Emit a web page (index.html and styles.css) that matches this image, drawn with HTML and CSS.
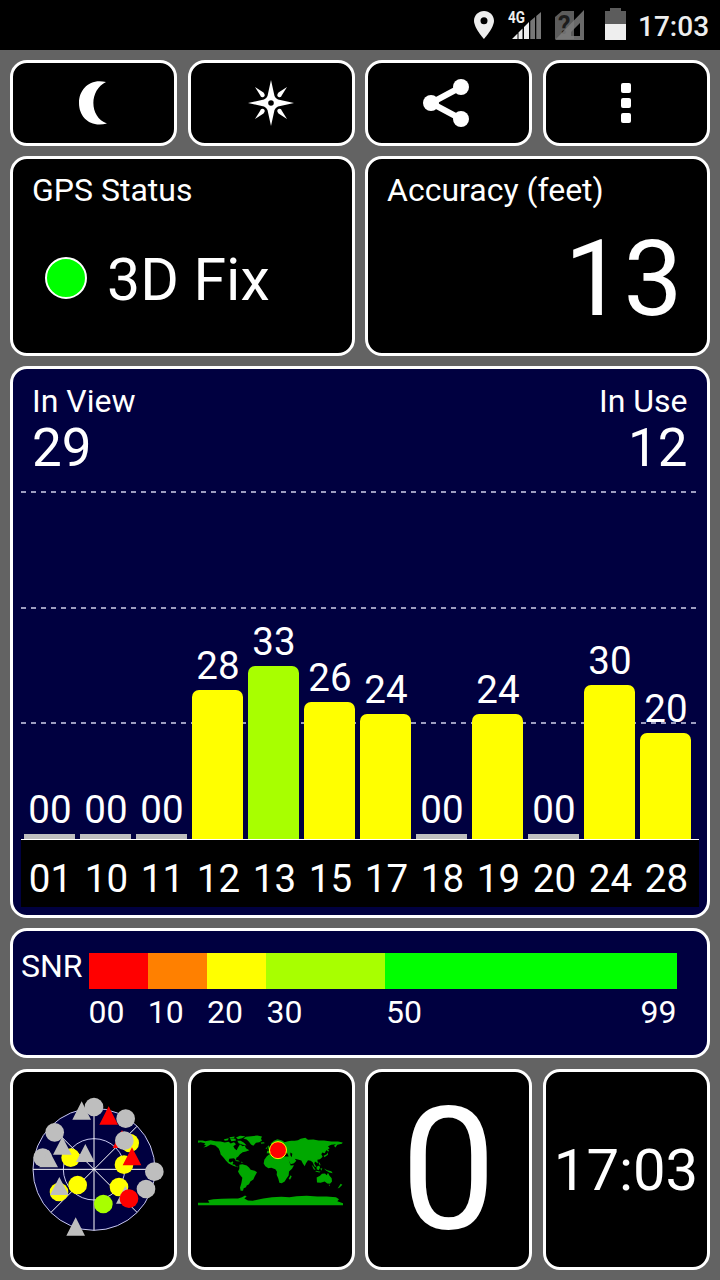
FILE: index.html
```html
<!DOCTYPE html>
<html lang="en">
<head>
    <meta charset="UTF-8">
    <meta name="viewport" content="width=device-width, initial-scale=1.0">
    <title>GPS Status</title>
    <link rel="stylesheet" href="styles.css">
</head>
<body>
    <div class="statusbar">
        <svg class="pin" viewBox="0 0 20 28" width="20" height="28">
            <path fill="#eee" fill-rule="evenodd" d="M10 0C4.500 0 0 4.400 0 9.800C0 17 10 28 10 28S20 17 20 9.800C20 4.400 15.500 0 10 0ZM10 6.300a3.500 3.500 0 1 1 0 7a3.500 3.500 0 1 1 0-7Z"/>
        </svg>
        <svg class="signal" viewBox="0 0 34 30" width="34" height="30">
            <path fill="#eee" d="M4 29L9.500 23.500V29ZM10.500 22.500L14.500 18.500V29H10.500ZM16 17L21 12V29H16Z"/>
            <path fill="#777" d="M22.300 11L27 7V29H22.300ZM28.300 6L33 2V29H28.300Z"/>
            <text class="net" x="0" y="13" textLength="17" lengthAdjust="spacingAndGlyphs">4G</text>
        </svg>
        <svg class="sim" viewBox="0 0 30 30" width="30" height="30">
            <path fill="#5c5c5c" d="M0 7L7 1H19V29H0Z"/>
            <text class="sim-mark" x="3" y="24">?</text>
            <path fill="#7c7c7c" fill-opacity=".85" fill-rule="evenodd" d="M0 30L29 0V30ZM16 26H25V13L16 22Z"/>
        </svg>
        <svg class="battery" viewBox="0 0 21 32" width="21" height="32">
            <path fill="#5c5c5c" d="M5 0H16V3H21V16H0V3H5Z"/>
            <rect y="16" width="21" height="16" fill="#eee"/>
        </svg>
        <span class="clock">17:03</span>
    </div>

    <div class="dashboard">
        <button class="tile moon">
            <svg viewBox="0 0 28 44" width="28" height="44">
                <path fill="#fff" d="M27 1C11-3 0 8 0 22S11 47 28 42.500C10 36 10 9 27 1Z"/>
            </svg>
        </button>
        <button class="tile">
            <svg viewBox="0 0 46 46" width="46" height="46">
                <path fill="#fff" fill-rule="evenodd" d="M23 0L26.500 16Q27.500 18.500 30 19.500L46 23L30 26.500Q27.500 27.500 26.500 30L23 46L19.500 30Q18.500 27.500 16 26.500L0 23L16 19.500Q18.500 18.500 19.500 16ZM23 20.200a2.800 2.800 0 1 0 0 5.600a2.800 2.800 0 1 0 0-5.600Z"/>
                <path fill="#fff" d="M7 7L15.500 12.500Q18 15.500 15.500 17Q13 18 12 15ZM39 7L30.500 12.500Q28 15.500 30.500 17Q33 18 34 15ZM7 39L15.500 33.500Q18 30.500 15.500 29Q13 28 12 31ZM39 39L30.500 33.500Q28 30.500 30.500 29Q33 28 34 31Z"/>
            </svg>
        </button>
        <button class="tile share">
            <svg viewBox="0 0 46 48" width="46" height="48">
                <path fill="none" stroke="#fff" stroke-width="6" d="M38 8L8 24L38 40"/>
                <g fill="#fff"><circle cx="38" cy="8" r="8"/><circle cx="8" cy="24" r="8"/><circle cx="38" cy="40" r="8"/></g>
            </svg>
        </button>
        <button class="tile">
            <svg viewBox="0 0 10 40" width="10" height="40" fill="#fff">
                <rect width="10" height="10" rx="2"/>
                <rect y="15" width="10" height="10" rx="2"/>
                <rect y="30" width="10" height="10" rx="2"/>
            </svg>
        </button>

        <div class="tile half">
            <div class="title">GPS Status</div>
            <div class="fix"><span class="dot"></span>3D Fix</div>
        </div>
        <div class="tile half">
            <div class="title">Accuracy (feet)</div>
            <div class="accuracy">13</div>
        </div>

        <div class="tile full satellites">
            <div class="counts">
                <div>
                    <div class="title">In View</div>
                    <div class="count">29</div>
                </div>
                <div class="right">
                    <div class="title">In Use</div>
                    <div class="count">12</div>
                </div>
            </div>
            <div class="plot">
                <svg class="gridlines" viewBox="0 0 678 349" width="678" height="349">
                    <path d="M0 2H675M0 118H675M0 233H675"/>
                </svg>
                <div class="bars">
                    <div class="bar"><span>00</span><i class="none"></i></div>
                    <div class="bar"><span>00</span><i class="none"></i></div>
                    <div class="bar"><span>00</span><i class="none"></i></div>
                    <div class="bar"><span>28</span><i style="height: 149px"></i></div>
                    <div class="bar"><span>33</span><i class="good" style="height: 173px"></i></div>
                    <div class="bar"><span>26</span><i style="height: 137px"></i></div>
                    <div class="bar"><span>24</span><i style="height: 125px"></i></div>
                    <div class="bar"><span>00</span><i class="none"></i></div>
                    <div class="bar"><span>24</span><i style="height: 125px"></i></div>
                    <div class="bar"><span>00</span><i class="none"></i></div>
                    <div class="bar"><span>30</span><i style="height: 154px"></i></div>
                    <div class="bar"><span>20</span><i style="height: 106px"></i></div>
                </div>
            </div>
            <div class="ids">
                <span>01</span><span>10</span><span>11</span><span>12</span><span>13</span><span>15</span>
                <span>17</span><span>18</span><span>19</span><span>20</span><span>24</span><span>28</span>
            </div>
        </div>

        <div class="tile full snr">
            <span class="snr-label">SNR</span>
            <div class="scale">
                <div class="seg red"><span>00</span></div>
                <div class="seg orange"><span>10</span></div>
                <div class="seg yellow"><span>20</span></div>
                <div class="seg lime"><span>30</span></div>
                <div class="seg green"><span>50</span><span>99</span></div>
            </div>
        </div>

        <div class="tile">
            <svg viewBox="40 34 420 440" width="140" height="146.670">
                <circle cx="250" cy="254" r="183" fill="#000040"/>
                <g fill="none" stroke="#fff" stroke-width="3">
                    <circle cx="250" cy="254" r="183" stroke="#c8c8f0"/>
                    <circle cx="250" cy="254" r="92" stroke="#c8c8f0"/>
                    <path d="M67 254H433M250 71V437M121 383L379 125M121 125L379 383"/>
                </g>
                <path fill="#f00" d="M334 136L362 190H306Z"/>
                <g fill="#ff0">
                    <circle cx="180" cy="219" r="28"/><circle cx="201" cy="301" r="28"/>
                    <circle cx="145" cy="322" r="28"/><circle cx="357" cy="175" r="28"/>
                    <circle cx="340" cy="240" r="28"/><circle cx="325" cy="307" r="28"/>
                </g>
                <circle cx="278" cy="358" r="28" fill="#a8ff00"/>
                <g fill="#bebebe">
                    <path d="M213 50L241 105H185ZM155 156L183 210H127ZM224 178L252 232H196ZM146 277L174 331H118ZM195 398L223 453H167ZM344 304L372 357H316Z"/>
                    <circle cx="250" cy="67" r="28"/><circle cx="345" cy="102" r="28"/>
                    <circle cx="132" cy="143" r="28"/><circle cx="96" cy="219" r="28"/>
                    <circle cx="341" cy="168" r="28"/><circle cx="431" cy="261" r="28"/>
                    <circle cx="406" cy="313" r="28"/>
                    <path d="M114 195L142 248H86Z"/>
                </g>
                <g fill="#f00">
                    <path d="M294 65L322 120H266ZM364 188L392 242H336Z"/>
                    <circle cx="355" cy="342" r="28"/>
                </g>
            </svg>
        </div>
        <div class="tile">
            <svg viewBox="21 38.500 444 220" width="148" height="73.330">
                <g fill="#00a800">
                    <path d="M24 61L38 61L46 63L62 60L76 63L92 64L104 67L116 65L122 70L132 66L138 72L130 78L134 86L140 90L144 82L150 72L158 78L164 76L168 84L178 90L168 94L158 96L150 102L144 110L139 113L138 120L132 114L118 116L116 123L122 127L128 123L130 128L127 132L135 134L138 139L146 140L142 141L128 136L116 130L108 122L101 113L92 103L90 94L86 85L76 76L62 73L50 80L40 82L48 76L42 73L46 69L32 66L24 68Z"/>
                    <path d="M160 55L168 50L184 48L202 46L216 49L213 56L216 61L208 66L198 68L190 77L183 73L177 65L170 58Z"/>
                    <path d="M102 57L116 54L114 60L104 62ZM120 55L136 56L138 61L124 63ZM118 51L134 49L132 54L120 54ZM138 52L150 47L166 48L156 54L144 57ZM142 62L152 62L162 68L170 76L158 74L146 69ZM212 67L222 66L224 69L214 71Z"/>
                    <path d="M134 120L144 120L150 124L140 123ZM153 125L160 126L154 128Z"/>
                    <path d="M148 134L157 132L170 136L177 142L182 149L194 152L201 156L194 169L190 178L181 184L177 192L170 196L168 201L161 204L159 212L152 212L150 203L154 189L157 173L149 163L144 154L148 146Z"/>
                    <path d="M230 99L232 92L240 91L238 84L246 80L254 74L244 76L242 70L252 62L262 57L276 61L284 66L294 63L304 62L314 62L324 60L332 56L346 53L354 59L370 58L386 61L402 61L424 64L444 64L458 67L456 71L442 74L436 82L432 77L438 72L424 74L414 78L419 84L408 92L404 99L397 97L394 102L398 110L390 117L382 119L384 130L375 124L373 130L380 142L373 138L368 126L362 122L354 120L348 129L344 138L338 129L334 121L324 118L314 116L319 122L312 129L302 132L296 120L302 136L312 135L306 146L297 154L296 166L290 174L284 184L275 189L268 188L265 176L260 164L261 155L256 147L244 143L235 144L226 138L221 130L223 119L230 109L237 103L247 100Z"/>
                    <path d="M232 80L237 75L238 82L242 87L232 88L235 84ZM228 83L232 81L231 86L227 86ZM302 165L305 169L300 179L296 175Z"/>
                    <path d="M365 134L372 141L377 150L371 147ZM380 140L388 136L390 143L386 150L380 147ZM391 145L397 144L394 152ZM378 152L392 155L388 157L376 154ZM402 145L412 150L424 153L428 159L418 157L408 151ZM386 125L390 130L392 136L387 132ZM401 107L410 102L413 96L414 104L403 111ZM412 86L417 91L415 95L411 92Z"/>
                    <path d="M380 172L390 167L396 161L405 160L410 165L414 158L418 166L425 174L426 184L420 191L412 190L404 184L392 188L381 187ZM416 194L420 194L418 198ZM452 191L457 194L449 202L443 205Z"/>
                    <path d="M24 248H58L54 240L70 237L96 236L126 235L144 235L156 231L165 226L170 229L163 235L174 241L188 242L202 239L220 235L246 231L274 230L298 231L320 228L350 227L382 229L410 229L438 231L447 237L442 243L459 249V255H24Z"/>
                </g>
                <path fill="#000" d="M252 99L264 96L278 103L284 97L292 99L296 109L286 109L272 107L262 105L254 102ZM301 97L307 101L305 111L301 105Z"/>
                <circle cx="264" cy="90" r="25.500" fill="#f00" stroke="#ff0" stroke-width="3"/>
            </svg>
        </div>
        <div class="tile speed">0</div>
        <div class="tile time">17:03</div>
    </div>
</body>
</html>
```

FILE: styles.css
```css
* { box-sizing: border-box; }
body {
    margin: 0;
    background-color: #636363;
    color: #fff;
    font-family: 'Roboto', sans-serif;
    font-size: 32px;
    line-height: 38px;
}
svg { display: block; flex: none; }
.statusbar {
    height: 50px;
    padding-right: 12px;
    background-color: #000;
    display: flex;
    justify-content: flex-end;
    align-items: center;
}
.signal { margin-left: 14px; overflow: visible; }
.net { fill: #eee; font-size: 16px; font-weight: 700; }
.sim { margin-left: 13px; }
.sim-mark { fill: #1c1c1c; font-size: 25px; font-weight: 700; }
.battery { margin-left: 20px; margin-bottom: 2px; }
.clock {
    width: 70px;
    margin-left: 12px;
    padding-top: 3px;
    color: #eee;
    font-size: 28px;
    font-weight: 500;
}
.dashboard {
    display: grid;
    grid-template-columns: repeat(4, 167px);
    grid-template-rows: 86px 200px 552px 131px 201px;
    gap: 10px 10.500px;
    padding: 10px;
}
.tile {
    background-color: #000;
    border: 3px solid #fff;
    border-radius: 17px;
    padding: 0;
    display: flex;
    justify-content: center;
    align-items: center;
}
.moon svg { margin-left: -1px; }
.share svg { margin-left: -5px; }
.half {
    grid-column: span 2;
    display: block;
    padding: 12px 24px 0 19px;
}
.fix {
    display: flex;
    align-items: center;
    margin-top: 36px;
    padding-left: 13px;
    font-size: 59px;
    line-height: 70px;
}
.dot {
    width: 42px;
    height: 42px;
    margin: 0 20px 4px 0;
    background-color: #0f0;
    border: 2px solid #fff;
    border-radius: 50%;
}
.accuracy {
    margin-top: 11px;
    font-size: 105px;
    line-height: 120px;
    text-align: right;
}
.full {
    grid-column: span 4;
    background-color: #000040;
}
.satellites {
    display: block;
    padding: 13px 8px 0;
}
.counts {
    display: flex;
    justify-content: space-between;
    height: 108px;
    padding: 0 11px;
}
.right { text-align: right; }
.count {
    font-size: 53px;
    line-height: 56px;
}
.plot {
    display: grid;
    height: 350px;
    border-bottom: 1px solid #fff;
}
.gridlines, .bars { grid-area: 1 / 1; }
.gridlines path {
    stroke: #9c9cc0;
    stroke-width: 2;
    stroke-dasharray: 5 5;
}
.bars {
    display: flex;
    align-items: flex-end;
    gap: 5px;
    padding-left: 3px;
}
.bar { width: 51px; text-align: center; }
.bar span {
    display: block;
    margin-bottom: 4px;
    padding-left: 1px;
    font-size: 38.500px;
    line-height: 40px;
}
.bar i {
    display: block;
    background-color: #ff0;
    border-radius: 7px 7px 0 0;
}
.bar .good { background-color: #a8ff00; }
.bar .none {
    height: 5px;
    background-color: #bebebe;
    border-radius: 0;
}
.ids {
    display: flex;
    gap: 5px;
    height: 67px;
    padding-left: 4px;
    background-color: #000;
    font-size: 38.500px;
    line-height: 77px;
}
.ids span { width: 51px; text-align: center; }
.snr {
    align-items: flex-start;
    justify-content: flex-start;
    margin-bottom: 1px;
    padding: 22px 30px 0 8px;
}
.snr-label { width: 68px; margin-top: -6px; }
.scale { display: flex; width: 588px; }
.seg {
    width: 59.300px;
    border-top: 36px solid;
    padding-top: 4px;
}
.seg span { color: #fff; }
.red { border-color: #f00; }
.orange { border-color: #ff8000; }
.yellow { border-color: #ff0; }
.lime { width: 118.600px; border-color: #a8ff00; }
.green {
    display: flex;
    justify-content: space-between;
    width: 291.500px;
    padding-left: 1px;
    border-color: #0f0;
}
.speed { font-size: 170px; }
.time { font-size: 58px; }
```
